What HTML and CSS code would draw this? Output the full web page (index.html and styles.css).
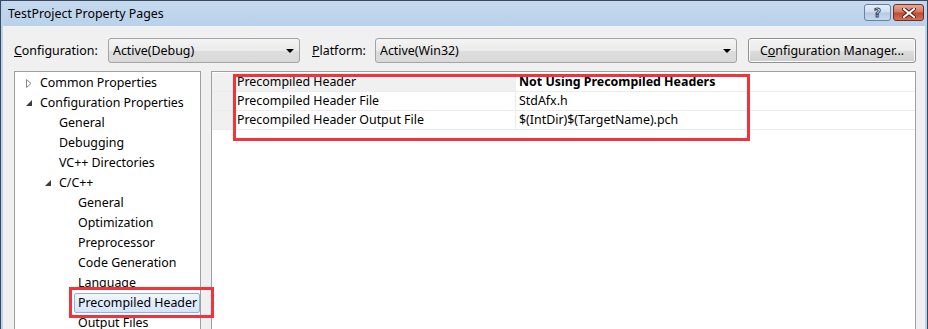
FILE: index.html
```html
<!DOCTYPE html>
<html>
<head>
<meta charset="utf-8">
<link rel="stylesheet" href="styles.css">
</head>
<body>
<div class="window">
  <div class="titlebar">
    <span class="title">TestProject Property Pages</span>
    <div class="caption-btns">
      <div class="cap-btn help"><span class="q">?</span></div>
      <div class="cap-btn close">
        <svg width="14" height="10" viewBox="0 0 14 10">
          <path d="M2 1 L12 9 M12 1 L2 9" stroke="#5a1a12" stroke-width="4" stroke-linecap="square"/>
          <path d="M2 1 L12 9 M12 1 L2 9" stroke="#ffffff" stroke-width="2" stroke-linecap="square"/>
        </svg>
      </div>
    </div>
  </div>
  <div class="client">
    <div class="toolbar">
      <label class="lbl lbl-config"><u>C</u>onfiguration:</label>
      <div class="combo combo-config"><span>Active(Debug)</span><i class="arrow"></i></div>
      <label class="lbl lbl-platform"><u>P</u>latform:</label>
      <div class="combo combo-platform"><span>Active(Win32)</span><i class="arrow"></i></div>
      <div class="button">C<u>o</u>nfiguration Manager...</div>
    </div>
    <div class="panels">
      <div class="tree">
        <div class="node lvl0"><span class="exp"><svg width="6" height="9" viewBox="0 0 6 9"><path d="M0.5 0.5 L5 4.5 L0.5 8.5 Z" fill="#fff" stroke="#8a8a8a"/></svg></span><span class="txt">Common Properties</span></div>
        <div class="node lvl0"><span class="exp"><svg width="7" height="7" viewBox="0 0 7 7"><path d="M6 0 L6 6 L0 6 Z" fill="#3c3c3c"/></svg></span><span class="txt">Configuration Properties</span></div>
        <div class="node lvl1"><span class="exp"></span><span class="txt">General</span></div>
        <div class="node lvl1"><span class="exp"></span><span class="txt">Debugging</span></div>
        <div class="node lvl1"><span class="exp"></span><span class="txt">VC++ Directories</span></div>
        <div class="node lvl1"><span class="exp"><svg width="7" height="7" viewBox="0 0 7 7"><path d="M6 0 L6 6 L0 6 Z" fill="#3c3c3c"/></svg></span><span class="txt">C/C++</span></div>
        <div class="node lvl2"><span class="exp"></span><span class="txt">General</span></div>
        <div class="node lvl2"><span class="exp"></span><span class="txt">Optimization</span></div>
        <div class="node lvl2"><span class="exp"></span><span class="txt">Preprocessor</span></div>
        <div class="node lvl2"><span class="exp"></span><span class="txt">Code Generation</span></div>
        <div class="node lvl2"><span class="exp"></span><span class="txt">Language</span></div>
        <div class="node lvl2"><span class="exp"></span><span class="txt selected">Precompiled Header</span></div>
        <div class="node lvl2"><span class="exp"></span><span class="txt">Output Files</span></div>
      </div>
      <div class="grid">
        <div class="row first">
          <div class="gutter"></div>
          <div class="name">Precompiled Header</div>
          <div class="value bold">Not Using Precompiled Headers</div>
        </div>
        <div class="row">
          <div class="gutter"></div>
          <div class="name">Precompiled Header File</div>
          <div class="value">StdAfx.h</div>
        </div>
        <div class="row">
          <div class="gutter"></div>
          <div class="name">Precompiled Header Output File</div>
          <div class="value">$(IntDir)$(TargetName).pch</div>
        </div>
      </div>
    </div>
  </div>
  <div class="mark mark-grid"></div>
  <div class="mark mark-tree"></div>
</div>
</body>
</html>
```

FILE: styles.css
```css
* { box-sizing: border-box; }
html, body { margin: 0; padding: 0; }
body {
  width: 928px;
  height: 329px;
  overflow: hidden;
  font-family: "Noto Sans", "Open Sans", sans-serif;
  font-size: 12.4px;
  color: #000;
  background: #fff;
}
.window {
  position: relative;
  width: 928px;
  height: 329px;
  border: 1px solid #3a4a5e;
  border-bottom: none;
  background: #bcd3ec;
  padding: 0 2px;
  display: flex;
  flex-direction: column;
}
.titlebar {
  height: 25px;
  flex: none;
  display: flex;
  align-items: flex-start;
  justify-content: space-between;
  background: linear-gradient(#c6d9ee, #b9d1ea);
}
.title {
  font-family: "Noto Sans", sans-serif;
  font-size: 12.4px;
  line-height: 26px;
  padding-left: 5px;
  color: #000;
}
.caption-btns {
  display: flex;
  gap: 2px;
  margin-top: 3px;
  margin-right: 1px;
}
.cap-btn {
  height: 17px;
  border-radius: 3px;
  display: flex;
  align-items: center;
  justify-content: center;
}
.help {
  width: 27px;
  border: 1px solid #6a819f;
  background: linear-gradient(#e6eef8 0%, #cddcee 48%, #b4c9e2 52%, #c8d9ed 100%);
}
.q {
  font-family: "DejaVu Sans", sans-serif;
  font-weight: bold;
  font-size: 12px;
  line-height: 12px;
  color: #fff;
  -webkit-text-stroke: 1px #33475f;
}
.close {
  width: 31px;
  border: 1px solid #7b2a1f;
  background: linear-gradient(#e4a898 0%, #d27a66 45%, #c14a32 55%, #d2715a 100%);
}
.client {
  flex: 1;
  background: #f0f0f0;
  display: flex;
  flex-direction: column;
  padding: 12px 9px 0 11px;
  min-height: 0;
}
.toolbar {
  display: flex;
  align-items: center;
  height: 25px;
  flex: none;
}
.lbl { line-height: 25px; }
.lbl-config { width: 94px; }
.lbl-platform { width: 63px; margin-left: 12px; }
.combo {
  height: 25px;
  border: 1px solid #a4a4a4;
  border-radius: 3px;
  background: linear-gradient(#f4f4f4 0%, #ebebeb 50%, #dddddd 51%, #d9d9d9 100%);
  display: flex;
  align-items: center;
  justify-content: space-between;
  padding: 0 4px 0 4px;
}
.combo-config { width: 192px; }
.combo-platform { width: 362px; }
.arrow {
  width: 0;
  height: 0;
  border-left: 4px solid transparent;
  border-right: 4px solid transparent;
  border-top: 4px solid #000;
  margin-right: 1px;
}
.button {
  margin-left: 11px;
  width: 168px;
  height: 25px;
  border: 1px solid #8f8f8f;
  border-radius: 3px;
  background: linear-gradient(#f2f2f2 0%, #ebebeb 50%, #dddddd 51%, #cfcfcf 100%);
  display: flex;
  align-items: center;
  justify-content: center;
  box-shadow: inset 0 0 0 1px #fcfcfc;
}
.panels {
  display: flex;
  gap: 10px;
  margin-top: 8px;
  flex: 1;
  min-height: 0;
}
.tree {
  width: 187px;
  flex: none;
  background: #fff;
  border: 1px solid #a0a0a0;
  border-bottom: none;
  padding-top: 1px;
}
.node {
  height: 20px;
  display: flex;
  align-items: center;
  white-space: nowrap;
}
.exp {
  width: 25px;
  flex: none;
  display: flex;
  align-items: center;
  padding-left: 11px;
}
.lvl1 { padding-left: 19px; }
.lvl2 { padding-left: 38px; }
.txt { line-height: 18px; }
.selected {
  margin-left: -4px;
  padding: 0 2px 0 3px;
  height: 20px;
  line-height: 18px;
  border: 1px solid #8fb3dc;
  border-radius: 2px;
  background: linear-gradient(#f0f6fe, #d4e5fa);
  width: 126px;
}
.grid {
  width: 705px;
  flex: none;
  background: #fff;
  border: 1px solid #a0a0a0;
  border-bottom: none;
  padding-top: 1px;
}
.row {
  display: flex;
  height: 19px;
  border-bottom: 1px solid #ececec;
}
.gutter {
  width: 22px;
  flex: none;
  background: #f0f0f0;
}
.name {
  width: 282px;
  flex: none;
  padding-left: 3px;
  line-height: 18px;
  border-right: 1px solid #ececec;
  white-space: nowrap;
}
.row.first .name { background: #f0f0f0; }
.value {
  flex: 1;
  padding-left: 3px;
  line-height: 18px;
  white-space: nowrap;
}
.bold { font-weight: bold; }
.mark {
  position: absolute;
  border: 3px solid #f0343c;
  pointer-events: none;
}
.mark-grid { left: 232px; top: 73px; width: 517px; height: 67px; }
.mark-tree { left: 68px; top: 286px; width: 145px; height: 31px; }
```
